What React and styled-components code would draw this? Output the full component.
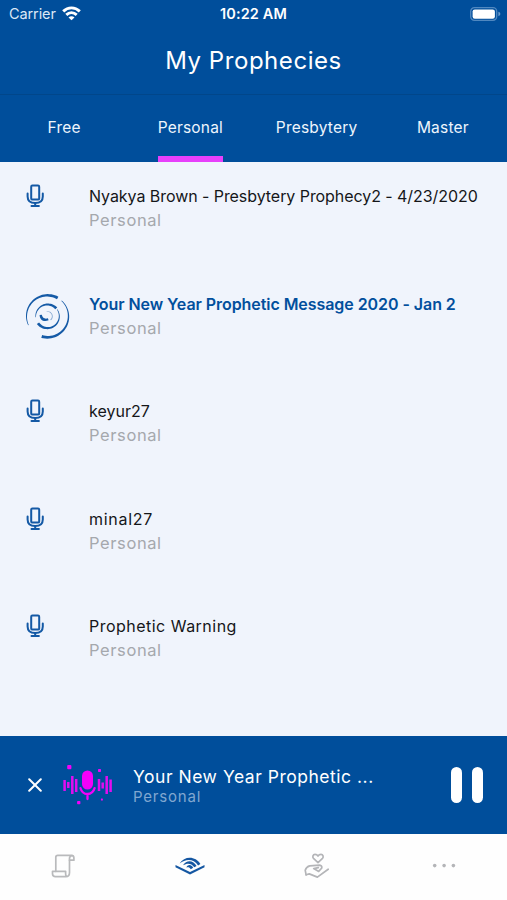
import { useState } from "react";
import styled, { createGlobalStyle } from "styled-components";

const GlobalStyle = createGlobalStyle`
  * {
    box-sizing: border-box;
  }
  body {
    margin: 0;
    background: #fefefe;
    font-family: Inter, "Open Sans", sans-serif;
  }
  svg {
    display: block;
  }
  button {
    border: none;
    background: none;
    padding: 0;
    font: inherit;
    cursor: pointer;
  }
`

const Screen = styled.div`
  width: 507px;
  height: 900px;
  display: flex;
  flex-direction: column;
  overflow: hidden;
  background: #f0f4fc;
`

const StatusBar = styled.div`
  height: 27px;
  padding: 0 9px;
  display: grid;
  grid-template-columns: 1fr auto 1fr;
  align-items: center;
  background: #004e9b;
  color: #fff;
`

const Carrier = styled.div`
  display: flex;
  align-items: center;
  gap: 6px;
  font-size: 14.5px;
  letter-spacing: -0.1px;
  color: #dce8f6;
`

const Clock = styled.div`
  font-size: 14.5px;
  font-weight: 600;
  letter-spacing: 0.1px;
`

const Battery = styled.div`
  justify-self: end;
  margin-right: -3px;
`

const Header = styled.header`
  height: 68px;
  padding-bottom: 1px;
  display: flex;
  align-items: center;
  justify-content: center;
  background: #004e9b;
  border-bottom: 1px solid #01468a;
`

const Title = styled.h1`
  margin: 0;
  font-size: 24px;
  font-weight: 400;
  letter-spacing: 0.55px;
  color: #fff;
`

const Tabs = styled.nav`
  height: 67px;
  padding: 0 1px;
  display: grid;
  grid-template-columns: repeat(4, 1fr);
  justify-items: center;
  background: #004e9b;
`

const Tab = styled.button`
  height: 67px;
  padding-bottom: 2px;
  font-size: 15.5px;
  letter-spacing: 0.2px;
  color: #eef5fd;
  border-top: 6px solid transparent;
  border-bottom: 6px solid ${props => props.$active ? "#e740fb" : "transparent"};
`

const List = styled.main`
  flex: 1;
  padding-top: 22px;
`

const Row = styled.div`
  height: 107.5px;
  padding-left: 24px;
  display: grid;
  grid-template-columns: 65px 1fr;
  align-items: start;
`

const RowText = styled.div`
  display: flex;
  flex-direction: column;
`

const RowTitle = styled.div`
  height: 24px;
  line-height: 24px;
  font-size: 16px;
  white-space: nowrap;
  font-weight: ${props => props.$active ? 600 : 400};
  letter-spacing: ${props => props.$spacing}px;
  color: ${props => props.$active ? "#024f9d" : "#151619"};
`

const RowSub = styled.div`
  line-height: 24px;
  font-size: 16.5px;
  letter-spacing: 0.6px;
  color: #a5a8ad;
`

const Player = styled.section`
  height: 98px;
  padding: 0 24px 0 28px;
  display: flex;
  align-items: center;
  background: #004e9b;
`

const PlayerText = styled.div`
  flex: 1;
  margin-left: 21px;
  padding-top: 3px;
`

const PlayerTitle = styled.div`
  line-height: 20px;
  font-size: 17.5px;
  letter-spacing: 0.52px;
  color: #fff;
`

const PlayerSub = styled.div`
  line-height: 20px;
  font-size: 15px;
  letter-spacing: 0.8px;
  color: #80a7d0;
`

const Artwork = styled.div`
  margin-left: 21px;
`

const Pause = styled.button`
  display: flex;
  gap: 10px;
`

const PauseBar = styled.span`
  width: 11px;
  height: 36px;
  border-radius: 5.5px;
  background: #fff;
`

const BottomNav = styled.footer`
  height: 66px;
  display: grid;
  grid-template-columns: repeat(4, 1fr);
  place-items: center;
  padding-bottom: 3px;
  background: #fefefe;
`

const WifiIcon = () => (
  <svg width="19" height="15" viewBox="0 0 19 15" fill="none" stroke="#fff" strokeWidth="2.9">
    <path d="M1.2 5.4C6 0.7 13 0.7 17.8 5.4" />
    <path d="M4.3 8.9C7.4 6 11.6 6 14.7 8.9" />
    <path d="M6.5 11.4C8.2 9.9 10.8 9.9 12.5 11.4L9.5 14.3Z" fill="#fff" stroke="none" />
  </svg>
)

const BatteryIcon = () => (
  <svg width="31" height="14" viewBox="0 0 31 14">
    <rect x="0.7" y="0.7" width="26" height="12.6" rx="3.7" fill="none" stroke="#5088c0" strokeWidth="1.3" />
    <rect x="2.6" y="2.4" width="22.3" height="9.3" rx="2.2" fill="#fff" />
    <path d="M28.4 4.8Q30.4 5.4 30.4 7T28.4 9.2Z" fill="#6c9bcb" />
  </svg>
)

const MicIcon = () => (
  <svg width="23" height="24" viewBox="0 0 23 24" fill="none" stroke="#1459a5" strokeWidth="2" strokeLinecap="round" strokeLinejoin="round">
    <rect x="7.2" y="1.6" width="8" height="14" rx="1.2" />
    <path d="M3.6 9.5V12.4Q3.6 18.9 11.2 18.9T18.8 12.4V9.5" />
    <path d="M11.2 18.9V21.9M7.5 21.9H14.9" />
  </svg>
)

// Arc whose thickness goes from w0 to w1, angles in degrees clockwise from the right
const taper = (r, from, to, w0, w1) => {
  const outer = [];
  const inner = [];
  for (let i = 0; i <= 30; i++) {
    const t = i / 30;
    const a = (from + (to - from) * t) * Math.PI / 180;
    const w = (w0 + (w1 - w0) * t) / 2;
    outer.push(`${23.5 + (r + w) * Math.cos(a)} ${24.3 + (r + w) * Math.sin(a)}`);
    inner.unshift(`${23.5 + (r - w) * Math.cos(a)} ${24.3 + (r - w) * Math.sin(a)}`);
  }
  return `M${outer.concat(inner).join("L")}Z`;
}

const PlayingIcon = () => (
  <svg width="48" height="48" viewBox="0 0 48 48" fill="#155aa6">
    <path d={taper(21, -61, -205, 2.9, 0.6)} />
    <path d={taper(21, 106, -48, 3, 0.6)} />
    <path d={taper(11.8, -42, -185, 2.7, 0.5)} />
    <path d={taper(11.8, 144, -36, 2.8, 0.5)} />
    <path d="M15.6 23C15.6 28 20 30.5 24.6 28.3L23.9 26.3C21 27.3 18.6 26.2 17.8 22.8Z" />
    <path d={taper(4.8, -100, 50, 0.5, 1)} opacity="0.5" />
  </svg>
)

const CloseIcon = () => (
  <svg width="14" height="14" viewBox="0 0 14 14" fill="none" stroke="#fff" strokeWidth="2" strokeLinecap="round">
    <path d="M1.2 1.2L12.8 12.8M12.8 1.2L1.2 12.8" />
  </svg>
)

const VoiceArtwork = () => (
  <svg width="49" height="42" viewBox="0 0 49 42" fill="#f400fa">
    <rect x="19" y="6.5" width="11" height="19" rx="5.5" />
    <path d="M17.5 24.2Q19.2 30 24.5 30T31.6 24.2M24.5 30V35" fill="none" stroke="#f400fa" strokeWidth="2.3" strokeLinecap="round" />
    <path d="M1.6 16V27M5.3 18V24M9.3 12V30M13.2 15V28M36 15V27M39.7 18.5V24.5M43.7 12V30M47.6 15.5V28" fill="none" stroke="#e20df0" strokeWidth="2.5" />
    <rect x="4.2" y="1" width="4.2" height="4.2" rx="1" />
    <rect x="35" y="5" width="3" height="3" rx="0.7" />
    <rect x="14.1" y="37" width="3.3" height="3.3" rx="0.8" />
    <rect x="37.9" y="34.5" width="2" height="2" rx="0.5" />
  </svg>
)

const ScrollIcon = () => (
  <svg width="24" height="24" viewBox="0 0 24 24" fill="none" stroke="#b9babc" strokeWidth="1.7" strokeLinejoin="round" strokeLinecap="round">
    <path d="M4.8 17.3V3.3Q4.8 1.3 6.8 1.3H20.3Q22.9 1.3 22.9 3.8V6.2H18.5" />
    <path d="M21.1 1.5Q18.5 1.8 18.5 4.5V18.5Q18.5 22.7 14.9 22.7H4.5Q1.5 22.7 1.5 19.7V17.3H14.6V19.3Q14.6 22.7 16.5 22.3" />
  </svg>
)

const BookWavesIcon = () => (
  <svg width="30" height="18" viewBox="0 0 30 18" fill="#1557a2">
    <path d="M0.5 8L15 15L29.5 8V10.3L15 17.5L0.5 10.3Z" />
    <path d="M4.6 6.4C9.4-1.2 20.6-1.3 25.4 7.1L23.1 8.4C18.6 1.4 10.8 1.6 4.6 6.4Z" />
    <path d="M8 8.2C11.5 2.7 18.3 3 21.6 9L19.3 10.3C16.2 5.9 12.4 5.9 8 8.2Z" />
    <path d="M11.3 10.4C13.3 6.9 16.3 7.3 18.2 10.8L15.8 12.2C14.7 10.3 13.5 9.8 11.3 10.4Z" />
  </svg>
)

const GivingIcon = () => (
  <svg width="26" height="26" viewBox="0 0 26 26" fill="none" stroke="#b4b5b8" strokeWidth="1.7" strokeLinejoin="round" strokeLinecap="round">
    <path d="M14 9.7L9.5 5.4C8.1 3.9 9 1.4 11 1.4Q13 1.4 14 3.1Q15 1.4 17 1.4C19 1.4 19.9 3.9 18.5 5.4Z" />
    <path d="M2.1 21.8L1.2 17.2Q2.5 13.5 5.8 12.8L15.6 12.1Q18.1 12.4 17.8 15L14.7 18.4L9.7 15.6L14.3 14.7" />
    <path d="M2.1 21.8L5.3 20.9L13.4 24.1L24.2 16.2" />
  </svg>
)

const MoreIcon = () => (
  <svg width="24" height="6" viewBox="0 0 24 6" fill="#b4b5b8">
    <circle cx="2.7" cy="2.6" r="1.8" />
    <circle cx="12.1" cy="2.6" r="1.8" />
    <circle cx="21.4" cy="2.6" r="1.8" />
  </svg>
)

const tabs = ["Free", "Personal", "Presbytery", "Master"];

const prophecies = [
  { id: 1, title: "Nyakya Brown - Presbytery Prophecy2 - 4/23/2020", spacing: -0.06 },
  { id: 2, title: "Your New Year Prophetic Message 2020 - Jan 2", spacing: -0.06 },
  { id: 3, title: "keyur27", spacing: 0 },
  { id: 4, title: "minal27", spacing: 0.7 },
  { id: 5, title: "Prophetic Warning", spacing: 0.48 },
];

const App = () => {
  const [activeTab, setActiveTab] = useState("Personal");
  const [playing, setPlaying] = useState(2);

  return (
    <>
      <GlobalStyle />
      <Screen>
        <StatusBar>
          <Carrier>
            Carrier
            <WifiIcon />
          </Carrier>
          <Clock>10:22 AM</Clock>
          <Battery><BatteryIcon /></Battery>
        </StatusBar>
        <Header>
          <Title>My Prophecies</Title>
        </Header>
        <Tabs>
          {tabs.map(tab => (
            <Tab key={tab} $active={tab === activeTab} onClick={() => setActiveTab(tab)}>{tab}</Tab>
          ))}
        </Tabs>
        <List>
          {prophecies.map(item => (
            <Row key={item.id} onClick={() => setPlaying(item.id)}>
              {item.id === playing ? <PlayingIcon /> : <MicIcon />}
              <RowText>
                <RowTitle $active={item.id === playing} $spacing={item.spacing}>{item.title}</RowTitle>
                <RowSub>Personal</RowSub>
              </RowText>
            </Row>
          ))}
        </List>
        <Player>
          <CloseIcon />
          <Artwork><VoiceArtwork /></Artwork>
          <PlayerText>
            <PlayerTitle>Your New Year Prophetic ...</PlayerTitle>
            <PlayerSub>Personal</PlayerSub>
          </PlayerText>
          <Pause aria-label="Pause">
            <PauseBar />
            <PauseBar />
          </Pause>
        </Player>
        <BottomNav>
          <ScrollIcon />
          <BookWavesIcon />
          <GivingIcon />
          <MoreIcon />
        </BottomNav>
      </Screen>
    </>
  );
};

export default App
